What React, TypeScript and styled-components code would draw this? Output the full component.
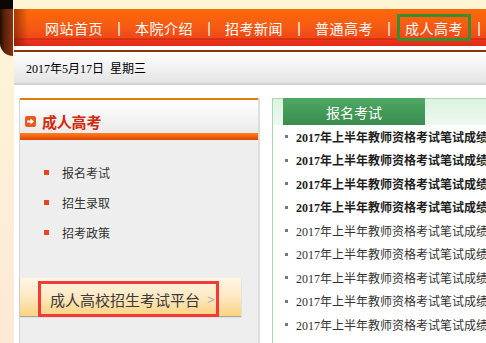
import React from "react";
import styled, { createGlobalStyle } from "styled-components";

const Global = createGlobalStyle`
  html, body { margin: 0; padding: 0; overflow: hidden; }
  body {
    width: 486px; height: 343px; background: #fdf3d8;
    font-family: "Noto Sans CJK SC", sans-serif;
  }
`;

const Page = styled.div`
  display: flex; width: 486px; height: 343px; overflow: hidden;
`;

const Gutter = styled.div`
  flex: 0 0 14px;
  background: linear-gradient(#fdf6d8, #fde9d6);
`;

const DarkTab = styled.div`
  width: 13px; height: 56px;
  border-bottom-left-radius: 13px;
  background:
    linear-gradient(#0d0704 0, #0d0704 9px, transparent 9px),
    linear-gradient(to right, #1e0c04 0, #5a220a 35%, #8c3212 100%);
`;

const Main = styled.div`
  flex: 1; min-width: 0;
  display: flex; flex-direction: column;
  background: #fff;
`;

const TopStrip = styled.div`
  height: 9px; background: #fdf5d4;
`;

const NavBar = styled.nav`
  height: 37px; flex: 0 0 37px;
  display: flex; align-items: center;
  padding-left: 31px;
  margin-bottom: 4px;
  background:
    linear-gradient(to right, rgba(90, 20, 0, 0.55), rgba(90, 20, 0, 0) 14px),
    linear-gradient(#fd6a08 0, #f65a14 18px, #ee4818 29px, #cf1e0c 30px, #e8361c 31px, #e22818 37px);
`;

const NavItem = styled.span`
  font-size: 14px; line-height: 1; color: #fff;
  letter-spacing: 0.5px; white-space: nowrap;
`;

const NavSep = styled.span`
  flex: 0 0 32px; text-align: center;
  font-size: 14px; line-height: 1; color: #fff;
  font-family: "Liberation Sans", sans-serif;
`;

const ActiveBox = styled.span`
  display: flex; align-items: center;
  height: 27px; box-sizing: border-box;
  margin: 0 -8px; padding: 0 5px;
  border: 3px solid #3a8c30;
`;

const DateBar = styled.div`
  flex: 0 0 31px;
  display: flex; align-items: center;
  padding-left: 12px;
  border-top: 2px solid #8a3410;
  border-bottom: 2px solid #d2d2d2;
  background: linear-gradient(#fff, #e4e4e4);
  font-family: "Liberation Serif", "Noto Sans CJK SC", serif;
  font-size: 12px; color: #000; white-space: pre;
`;

const Content = styled.div`
  flex: 1; min-height: 0;
  display: flex; gap: 12px;
  padding: 13px 0 0 5px;
`;

const LeftPanel = styled.section`
  flex: 0 0 241px; box-sizing: border-box;
  display: flex; flex-direction: column;
  border-left: 1px solid #d6d6d6;
  border-right: 2px solid #dedede;
`;

const PanelHead = styled.div`
  height: 33px; box-sizing: border-box;
  display: flex; align-items: center;
  padding: 10px 0 0 5px;
  border-top: 2px solid #e27b0c;
  height: 35px;
  background: linear-gradient(#fff, #ebebeb);
`;

const HeadIcon = styled.span`
  width: 11px; height: 11px; border-radius: 2px;
  background: #ea5a1c; margin-right: 6px;
  display: flex; align-items: center; justify-content: center;
`;

const HeadTitle = styled.h2`
  margin: 0; font-size: 15px; font-weight: bold; color: #d42a0a;
  line-height: 1; letter-spacing: -0.2px;
`;

const HeadBar = styled.div`
  height: 7px;
  background: linear-gradient(#fb8420, #ee5a08 60%, #d84c06);
`;

const PanelBody = styled.div`
  flex: 1; background: #eee;
  display: flex; flex-direction: column;
`;

const Menu = styled.ul`
  list-style: none; margin: 0; padding: 17px 0 0 24px;
`;

const MenuItem = styled.li`
  height: 30px; display: flex; align-items: center;
  font-size: 12px; color: #333;
`;

const MenuDot = styled.span`
  width: 5px; height: 5px; background: #e9441c; margin-right: 13px;
`;

const Banner = styled.div`
  margin-top: 31px; width: 221px; height: 38px; box-sizing: border-box;
  display: flex; align-items: flex-start;
  padding-left: 18px;
  background: linear-gradient(#fef6e4 0%, #fde8c2 50%, #fbd47f 100%);
  box-shadow: 0 1px 1px rgba(0, 0, 0, 0.3);
`;

const RedBox = styled.div`
  margin-top: 3px; width: 181px; height: 36px; box-sizing: border-box;
  border: 3px solid #f23a3a;
  display: flex; align-items: center;
  padding-left: 9px;
`;

const BannerText = styled.span`
  font-size: 15px; color: #3a3a3a; line-height: 1; white-space: nowrap;
`;

const BannerArrow = styled.span`
  margin-left: 7px; color: #b4b4b4; font-size: 13px;
  font-family: "Liberation Sans", sans-serif;
`;

const RightPanel = styled.section`
  flex: 0 0 240px; box-sizing: border-box;
  border: 1px solid #a6d8ae; border-bottom: none;
  background: #fff;
  display: flex; flex-direction: column;
`;

const TabHead = styled.div`
  height: 26px; display: flex; padding-left: 10px;
  background: linear-gradient(#dcf3e0, #eef9f0);
`;

const Tab = styled.div`
  width: 142px; margin-top: -1px;
  display: flex; align-items: center; justify-content: center;
  background: linear-gradient(#4ea862, #3a8c4e);
  color: #fff; font-size: 14px;
`;

const NewsList = styled.ul`
  list-style: none; margin: 0; padding: 0;
`;

const NewsItem = styled.li<{ $bold?: boolean }>`
  height: 23.5px; display: flex; align-items: center;
  padding-left: 12px; white-space: nowrap; overflow: hidden;
  font-family: "Liberation Serif", "Noto Sans CJK SC", serif;
  font-size: 12px;
  font-weight: ${(p) => (p.$bold ? "bold" : "normal")};
  color: ${(p) => (p.$bold ? "#1e1e1e" : "#333")};
`;

const NewsDot = styled.span`
  flex: 0 0 3px; height: 3px; background: #777; margin-right: 8px;
`;

const navItems = ["网站首页", "本院介绍", "招考新闻", "普通高考", "成人高考"];
const menuItems = ["报名考试", "招生录取", "招考政策"];
const news = Array.from({ length: 9 }, (_, i) => ({
  title: "2017年上半年教师资格考试笔试成绩查询入口",
  bold: i < 4,
}));

export default function App() {
  return (
    <>
      <Global />
      <Page>
        <Gutter>
          <DarkTab />
        </Gutter>
        <Main>
          <TopStrip />
          <NavBar>
            {navItems.map((t, i) => (
              <React.Fragment key={t}>
                {i === 4 ? (
                  <ActiveBox>
                    <NavItem>{t}</NavItem>
                  </ActiveBox>
                ) : (
                  <NavItem>{t}</NavItem>
                )}
                <NavSep>|</NavSep>
              </React.Fragment>
            ))}
          </NavBar>
          <DateBar>{"2017年5月17日  星期三"}</DateBar>
          <Content>
            <LeftPanel>
              <PanelHead>
                <HeadIcon>
                  <svg width="9" height="9" viewBox="0 0 9 9">
                    <path d="M1 3.5h3.5V1.5L8 4.5 4.5 7.5V5.5H1z" fill="#fff" />
                  </svg>
                </HeadIcon>
                <HeadTitle>成人高考</HeadTitle>
              </PanelHead>
              <HeadBar />
              <PanelBody>
                <Menu>
                  {menuItems.map((m) => (
                    <MenuItem key={m}>
                      <MenuDot />
                      {m}
                    </MenuItem>
                  ))}
                </Menu>
                <Banner>
                  <RedBox>
                    <BannerText>成人高校招生考试平台</BannerText>
                    <BannerArrow>&gt;</BannerArrow>
                  </RedBox>
                </Banner>
              </PanelBody>
            </LeftPanel>
            <RightPanel>
              <TabHead>
                <Tab>报名考试</Tab>
              </TabHead>
              <NewsList>
                {news.map((n, i) => (
                  <NewsItem key={i} $bold={n.bold}>
                    <NewsDot />
                    {n.title}
                  </NewsItem>
                ))}
              </NewsList>
            </RightPanel>
          </Content>
        </Main>
      </Page>
    </>
  );
}
